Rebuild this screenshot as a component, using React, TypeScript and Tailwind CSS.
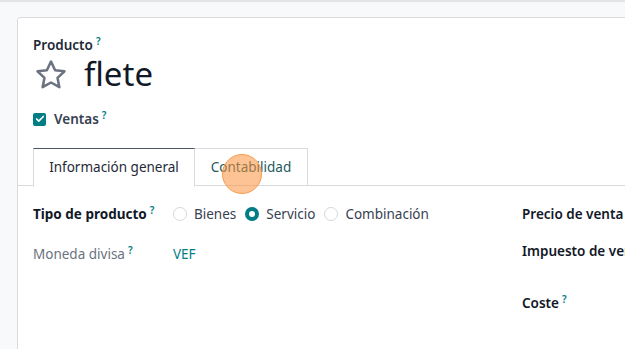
import { Check } from "lucide-react";

const font = { fontFamily: '"Noto Sans", "Open Sans", sans-serif' };

function Help() {
  return <sup className="ml-[3px] text-[10px] font-semibold text-[#017e84]">?</sup>;
}

function Radio({ label, checked }: { label: string; checked?: boolean }) {
  return (
    <label className="flex items-center gap-[7px] text-[13.5px] text-[#374151]">
      {checked ? (
        <span className="w-[14px] h-[14px] rounded-full border-[4px] border-[#017e84] bg-white" />
      ) : (
        <span className="w-[14px] h-[14px] rounded-full border border-[#d5d8dc] bg-white" />
      )}
      {label}
    </label>
  );
}

export default function App() {
  return (
    <div
      style={font}
      className="relative w-[625px] h-[349px] overflow-hidden bg-[#f8f9fa] border-t-2 border-[#e2e4e7] pl-[17px] pt-[15px]"
    >
      <div className="h-[400px] w-[700px] bg-white border border-[#d8dadd] rounded-tl-[3px] pl-[15px] pt-[17px]">
        {/* header */}
        <div className="text-[13.5px] font-semibold text-[#1f2937] leading-[20px]">
          Producto
          <Help />
        </div>
        <div className="flex items-center gap-[15px] mt-[2px] h-[36px]">
          <svg width="36" height="34" viewBox="0 0 24 24" fill="none" stroke="#6b7280" strokeWidth="1.8" strokeLinejoin="round">
            <path d="M12 2.5l2.9 6.1 6.6.8-4.9 4.6 1.3 6.6L12 17.3l-5.9 3.3 1.3-6.6-4.9-4.6 6.6-.8z" />
          </svg>
          <span className="text-[33px] leading-[36px] text-[#111827] pb-[2px]">flete</span>
        </div>
        <div className="flex items-center gap-[8px] mt-[16px] h-[20px]">
          <span className="w-[13px] h-[13px] rounded-[2px] bg-[#017e84] flex items-center justify-center">
            <Check className="w-[10px] h-[10px] text-white" strokeWidth={4} />
          </span>
          <span className="text-[13.5px] font-semibold text-[#374151]">
            Ventas
            <Help />
          </span>
        </div>

        {/* tabs */}
        <div className="flex mt-[19px] -ml-[15px] pl-[15px] border-b border-[#d8dadd] h-[38px]">
          <div className="w-[162px] h-[39px] bg-white border border-[#d8dadd] border-t-[#4b5563] border-b-white flex items-center justify-center text-[13.5px] text-[#1f2937]">
            Información general
          </div>
          <div className="w-[113px] h-[38px] border border-l-0 border-b-0 border-[#d8dadd] flex items-center justify-center text-[13.5px] text-[#1d5a5e]">
            Contabilidad
          </div>
        </div>

        {/* fields */}
        <div className="flex pt-[18px]">
          <div className="w-[489px]">
            <div className="flex items-center h-[20px]">
              <div className="w-[140px] text-[13.5px] font-bold text-[#111827]">
                Tipo de producto
                <Help />
              </div>
              <div className="flex items-center gap-[9px]">
                <Radio label="Bienes" />
                <Radio label="Servicio" checked />
                <Radio label="Combinación" />
              </div>
            </div>
            <div className="flex items-center h-[20px] mt-[20px]">
              <div className="w-[140px] text-[13.5px] text-[#6b7280]">
                Moneda divisa
                <Help />
              </div>
              <div className="text-[13.5px] text-[#017e84]">VEF</div>
            </div>
          </div>
          <div className="flex flex-col text-[13.5px] font-semibold text-[#111827] whitespace-nowrap">
            <div className="h-[20px] leading-[20px]">Precio de venta</div>
            <div className="h-[20px] leading-[20px] mt-[17px]">Impuesto de venta</div>
            <div className="h-[20px] leading-[20px] mt-[32px]">
              Coste
              <Help />
            </div>
          </div>
        </div>
      </div>

      {/* click marker */}
      <div className="absolute left-[222px] top-[152px] w-[40px] h-[40px] rounded-full bg-[#fb923c]/55 border border-[#f59e4c]" />
    </div>
  );
}
